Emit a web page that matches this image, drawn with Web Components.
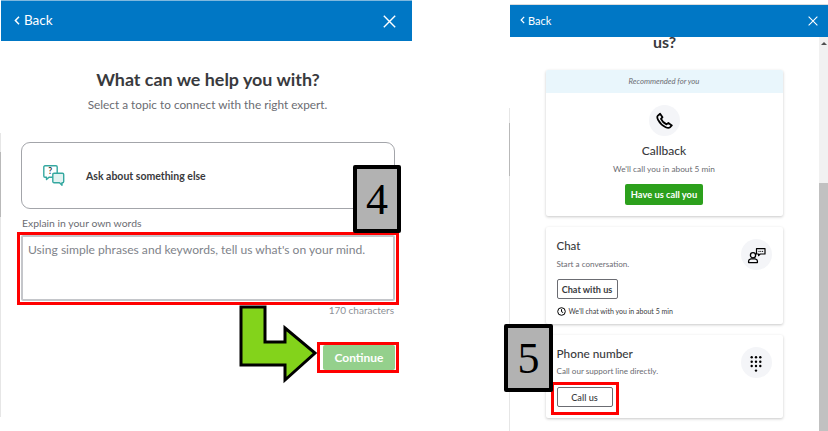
<!DOCTYPE html>
<html>
<head>
<meta charset="utf-8">
<style>
  html, body { margin: 0; padding: 0; background: #fff; }
  body { width: 828px; height: 431px; overflow: hidden; font-family: Lato, "Open Sans", sans-serif; }
</style>
</head>
<body>
<help-page>
  <help-panel slot="left" kind="wide">
    <topic-form></topic-form>
  </help-panel>
  <help-panel slot="right" kind="narrow" scroll>
    <div style="text-align:center;font-size:16px;font-weight:700;color:#393a3d;line-height:20px;height:38px;margin-top:-5px">us?</div>
    <contact-list></contact-list>
  </help-panel>
</help-page>

<script>
class HelpPage extends HTMLElement {
  constructor() {
    super()
    this.attachShadow({ mode: 'open' })
  }
  connectedCallback() {
    this.shadowRoot.innerHTML = `
      <style>
        :host { display: block; position: relative; width: 828px; height: 431px; overflow: hidden; }
        .row { display: flex; align-items: flex-start; height: 431px; }
        .left { margin: 0 0 0 1px; width: 411px; }
        .right { margin: 4px 0 0 98px; width: 318px; }
        .mark { position: absolute; box-sizing: border-box; border: 3px solid #f00; }
        .edge { position: absolute; width: 1px; background: #e6e6e6; }
        .edge.dark { background: #b9b9b9; }
        svg { position: absolute; left: 236px; top: 303px; }
      </style>
      <div class="row">
        <div class="left"><slot name="left"></slot></div>
        <div class="right"><slot name="right"></slot></div>
      </div>
      <div class="edge" style="left:0;top:133px;height:284px"></div>
      <div class="edge dark" style="left:0;top:152px;height:65px"></div>
      <div class="edge" style="left:509px;top:108px;height:323px"></div>
      <div class="edge dark" style="left:509px;top:123px;height:53px"></div>
      <div class="mark" style="left:17px;top:232px;width:382px;height:73px"></div>
      <div class="mark" style="left:317px;top:342px;width:82px;height:31px"></div>
      <div class="mark" style="left:551px;top:382px;width:68px;height:33px"></div>
      <step-box style="left:353px;top:165px;width:48px;height:68px">4</step-box>
      <step-box style="left:504px;top:324px;width:49px;height:68px">5</step-box>
      <svg width="84" height="82" viewBox="236 303 84 82">
        <path d="M241 307H265V342H285V328L315 353L285 380V365H241Z" fill="#83d31b" stroke="#000" stroke-width="3"/>
      </svg>
    `
  }
}

class StepBox extends HTMLElement {
  constructor() {
    super()
    this.attachShadow({ mode: 'open' }).innerHTML = `
      <style>
        :host {
          position: absolute; box-sizing: border-box; display: flex;
          align-items: center; justify-content: center;
          background: #b2b2b2; border: 4px solid #000; border-radius: 2px;
          font: 44px "Liberation Serif", serif; color: #000;
        }
      </style>
      <slot></slot>`
  }
}

class HelpPanel extends HTMLElement {
  constructor() {
    super()
    this.attachShadow({ mode: 'open' })
  }
  connectedCallback() {
    const narrow = this.getAttribute('kind') === 'narrow'
    const scroll = this.hasAttribute('scroll')
    this.shadowRoot.innerHTML = `
      <style>
        :host { display: block; }
        header {
          display: flex; align-items: center; justify-content: space-between;
          background: #0077c5; color: #fff;
          border-top: 1px solid ${narrow ? '#dcdcdc' : '#7fb8de'};
          height: ${narrow ? 32 : 40}px;
          padding: ${narrow ? '0 10px 0 10px' : '0 16px 0 13px'};
          font-size: ${narrow ? 11 : 13.5}px;
        }
        .back { display: flex; align-items: center; gap: ${narrow ? 3 : 4}px; margin-top: -2px; }
        .wrap { display: flex; }
        .body { flex: 1; min-width: 0; }
        .bar { width: 9px; background: #f1f1f1; position: relative; height: 394px; display: ${scroll ? 'block' : 'none'}; }
        .bar i { position: absolute; left: 0; right: 0; top: 146px; bottom: 0; background: #c1c1c1; }
        .bar b { position: absolute; left: 2px; top: 5px; border: 3px solid transparent; border-top: 0; border-bottom: 3px solid #505050; }
      </style>
      <header>
        <span class="back">
          <svg width="${narrow ? 5 : 6}" height="${narrow ? 8 : 9}" viewBox="0 0 6 9"><path d="M5 .8 1.4 4.5 5 8.2" fill="none" stroke="#fff" stroke-width="1.5"/></svg>
          Back
        </span>
        <svg width="${narrow ? 10 : 13}" height="${narrow ? 10 : 13}" viewBox="0 0 13 13"><path d="M.8.8 12.2 12.2M12.2.8.8 12.2" stroke="#fff" stroke-width="1.4"/></svg>
      </header>
      <div class="wrap">
        <div class="body"><slot></slot></div>
        <div class="bar"><b></b><i></i></div>
      </div>`
  }
}

class TopicForm extends HTMLElement {
  constructor() {
    super()
    this.attachShadow({ mode: 'open' }).innerHTML = `
      <style>
        :host { display: block; height: 376px; color: #393a3d; }
        h1 { margin: 0; padding: 27px 0 0 3px; text-align: center; font-size: 17.9px; line-height: 22px; font-weight: 700; }
        .sub { margin-top: 8px; padding-left: 2px; text-align: center; font-size: 11.8px; line-height: 14px; color: #6b6c72; }
        .topic {
          box-sizing: border-box; margin: 30px 17px 0 20px; height: 67px;
          display: flex; align-items: center; gap: 21px; padding-left: 21px;
          border: 1px solid #a3a5aa; border-radius: 9px;
          font-size: 10.5px; font-weight: 700;
        }
        label { display: block; margin: 7px 0 0 21px; font-size: 10.4px; line-height: 14px; color: #6b6c72; }
        .area {
          box-sizing: border-box; margin: 5px 17px 0 20px; height: 66px; padding: 4px 5px;
          border: 2px solid #c4c6ca; border-radius: 2px; font-size: 12.1px; line-height: 17px; color: #80838a;
        }
        .count { margin: 2px 18px 0 0; text-align: right; font-size: 10px; line-height: 14px; color: #8d9096; }
        .actions { display: flex; justify-content: flex-end; margin: 28px 17px 0 0; }
        button {
          border: 0; width: 72px; height: 25px; border-radius: 2px; padding: 0;
          background: #94d08c; color: #fff; font: 700 12px Lato, sans-serif;
        }
      </style>
      <h1>What can we help you with?</h1>
      <div class="sub">Select a topic to connect with the right expert.</div>
      <div class="topic">
        <svg width="22" height="21" viewBox="0 0 22 21" fill="none" stroke="#35a8a0" stroke-width="1.4" stroke-linejoin="round">
          <path d="M2 .8H13a1.2 1.2 0 0 1 1.2 1.2V11a1.2 1.2 0 0 1-1.2 1.2H6L3.5 14.5V12.2H2A1.2 1.2 0 0 1 .8 11V2A1.2 1.2 0 0 1 2 .8Z"/>
          <path d="M11 8.2H19.5a1.2 1.2 0 0 1 1.2 1.2V16.5a1.2 1.2 0 0 1-1.2 1.2H19V20.2L16.5 17.7H11a1.2 1.2 0 0 1-1.2-1.2V9.4A1.2 1.2 0 0 1 11 8.2Z" fill="#e3f3f2"/>
          <text x="7.2" y="9.4" font-family="Lato, sans-serif" font-size="8.5" font-weight="700" fill="#393a3d" stroke="none" text-anchor="middle">?</text>
        </svg>
        Ask about something else
      </div>
      <label>Explain in your own words</label>
      <div class="area">Using simple phrases and keywords, tell us what's on your mind.</div>
      <div class="count">170 characters</div>
      <div class="actions"><button>Continue</button></div>`
  }
}

const PHONE = '<path d="M5.1 1.8 2.9 3.6C1.9 4.5 2.2 6.1 3.1 7.9 4.7 11 7.3 13.6 10.7 15.2 12.5 16 13.9 16.2 14.9 15.3L16.8 13.4 13.4 10.9 11.5 12.4C9.6 11.5 6.9 8.9 6 6.9L7.5 5.2Z" fill="none" stroke="#000" stroke-width="1.8" stroke-linejoin="round"/>'
const CHAT = '<path d="M10.5 3.6H19V9H14.2L12.6 10.6V9H10.5Z" fill="none" stroke="#000" stroke-width="1.2" stroke-linejoin="round"/><circle cx="13" cy="6.3" r=".6"/><circle cx="14.8" cy="6.3" r=".6"/><circle cx="16.6" cy="6.3" r=".6"/><circle cx="7" cy="10.2" r="2.6" fill="#f4f5f8" stroke="#000" stroke-width="1.3"/><path d="M2.6 17.6V16C2.6 14.8 3.8 14.2 5 13.9H9C10.2 14.2 11.4 14.8 11.4 16V17.6Z" fill="none" stroke="#000" stroke-width="1.3" stroke-linejoin="round"/>'
const PAD = [4.7, 9, 13.3].map(x => [3.3, 7.7, 12].map(y => `<circle cx="${x + 1}" cy="${y + 1}" r="1.2" fill="#000"/>`).join('')).join('') + '<circle cx="10" cy="17.6" r="1.2" fill="#000"/>'

class ContactCard extends HTMLElement {
  constructor() {
    super()
    this.attachShadow({ mode: 'open' })
  }
  connectedCallback() {
    const svgIcon = `<svg width="20" height="20" viewBox="0 0 20 20">${this.getAttribute('icon') === 'pad' ? PAD : CHAT}</svg>`
    this.shadowRoot.innerHTML = `
      <style>
        :host {
          display: flex; box-sizing: border-box; width: 237px;
          justify-content: space-between; background: #fff; border-radius: 2px;
          box-shadow: 0 1px 3px rgba(0,0,0,.22); color: #393a3d;
          padding: 10px 11px 0;
          height: ${this.getAttribute('h')}px;
        }
        .text { flex: 1; }
        h2 { margin: 0; font-size: ${this.getAttribute('size')}px; line-height: 17px; font-weight: 500; }
        .round {
          width: 31px; height: 31px; border-radius: 50%; background: #f4f5f8;
          display: flex; align-items: center; justify-content: center; margin-top: 2px;
        }
      </style>
      <div class="text">
        <h2>${this.getAttribute('title')}</h2>
        <slot></slot>
      </div>
      <div class="round">${svgIcon}</div>`
  }
}

class ContactList extends HTMLElement {
  constructor() {
    super()
    this.attachShadow({ mode: 'open' }).innerHTML = `
      <style>
        :host { display: flex; flex-direction: column; align-items: center; gap: 11px; padding-right: 1px; color: #6b6c72; }
        .top { box-sizing: border-box; width: 237px; height: 146px; border-radius: 2px; box-shadow: 0 1px 3px rgba(0,0,0,.22); text-align: center; background: #fff; }
        .rec { height: 23px; line-height: 23px; background: #e9f6fc; font-size: 7.7px; font-style: italic; color: #6b6c72; border-radius: 2px 2px 0 0; }
        .round { width: 31px; height: 31px; border-radius: 50%; background: #f4f5f8; margin: 12px auto 0; display: flex; align-items: center; justify-content: center; }
        h2 { margin: 6px 0 0; font-size: 12px; line-height: 18px; font-weight: 500; color: #393a3d; }
        .line { margin-top: 2px; line-height: 14px; font-size: 8.3px; }
        .go {
          display: inline-block; box-sizing: border-box; width: 78px; height: 21px; line-height: 21px; margin-top: 8px;
          background: #2ca01c; color: #fff; border-radius: 2px; font-size: 9.3px; font-weight: 700;
        }
        .sub { margin: 3px 0 0; line-height: 14px; font-size: 8.1px; color: #6b6c72; }
        .btn {
          box-sizing: border-box; display: flex; align-items: center; justify-content: center;
          border: 1px solid #6b6c72; border-radius: 2px; height: 20px; color: #393a3d; font-size: 9.1px; font-weight: 700;
        }
        .note { display: flex; align-items: center; gap: 3px; margin-top: 6px; font-size: 7px; line-height: 12px; color: #393a3d; }
        .chat { width: 61px; margin-top: 8px; }
        .call { width: 56px; margin-top: 9px; font-weight: 500; font-size: 9.2px; }
      </style>
      <div class="top">
        <div class="rec">Recommended for you</div>
        <div class="round"><svg width="18" height="18" viewBox="0 0 18 18">${PHONE}</svg></div>
        <h2>Callback</h2>
        <div class="line">We'll call you in about 5 min</div>
        <div class="go">Have us call you</div>
      </div>
      <contact-card title="Chat" size="11.5" icon="chat" h="97">
        <div class="sub">Start a conversation.</div>
        <div class="btn chat">Chat with us</div>
        <div class="note">
          <svg width="9" height="9" viewBox="0 0 9 9" fill="none" stroke="#000"><circle cx="4.5" cy="4.5" r="3.8"/><path d="M4.5 2.2V4.7L6.2 5.6"/></svg>
          We'll chat with you in about 5 min
        </div>
      </contact-card>
      <contact-card title="Phone number" size="11.8" icon="pad" h="83">
        <div class="sub" style="margin-top:2px">Call our support line directly.</div>
        <div class="btn call">Call us</div>
      </contact-card>`
  }
}

customElements.define('step-box', StepBox)
customElements.define('help-page', HelpPage)
customElements.define('help-panel', HelpPanel)
customElements.define('topic-form', TopicForm)
customElements.define('contact-card', ContactCard)
customElements.define('contact-list', ContactList)
</script>
</body>
</html>
